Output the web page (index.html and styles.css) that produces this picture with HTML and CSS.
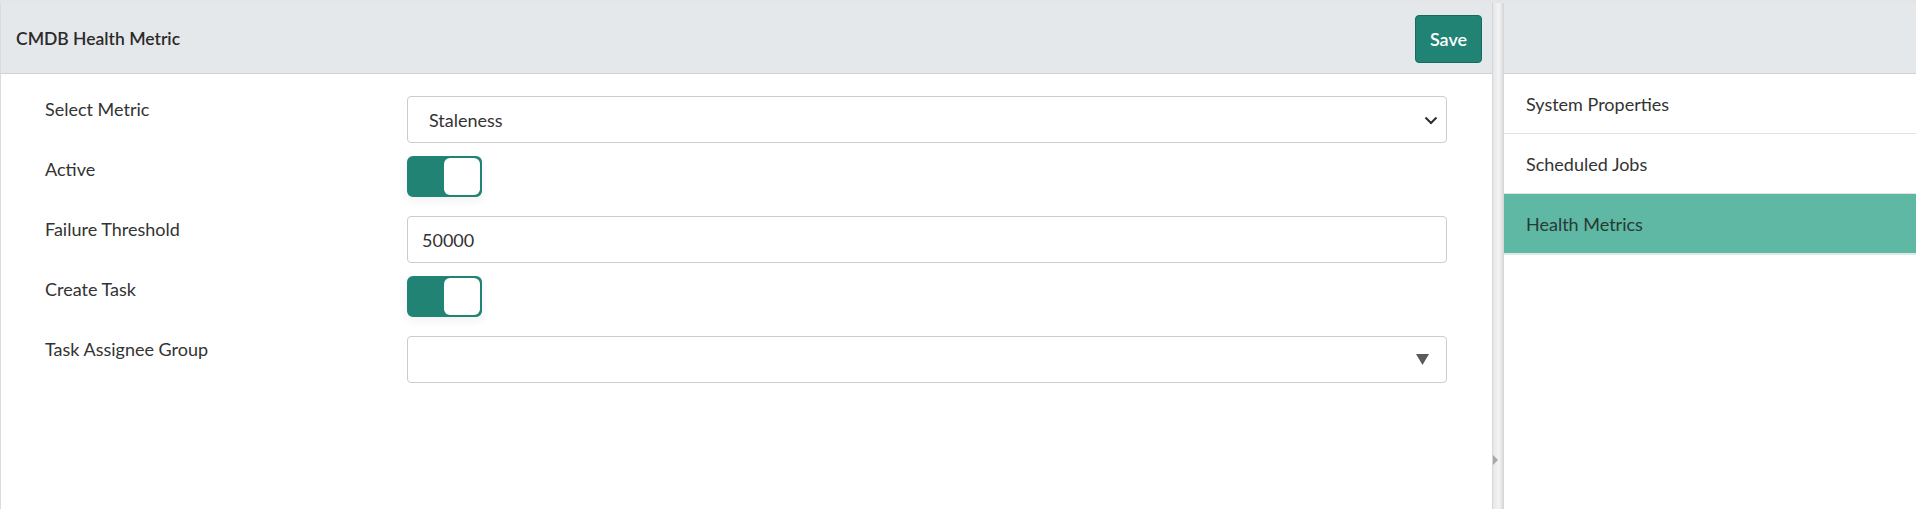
FILE: index.html
```html
<!DOCTYPE html>
<html>
<head>
<meta charset="utf-8">
<link rel="stylesheet" href="styles.css">
</head>
<body>
<div class="page">
  <section class="main">
    <header class="panel-head">
      <h1 class="title">CMDB Health Metric</h1>
      <button class="btn-save">Save</button>
    </header>
    <form class="form">
      <div class="row">
        <label class="lbl">Select Metric</label>
        <div class="field select">
          <span class="val val-select">Staleness</span>
          <svg class="chev" width="14" height="9" viewBox="0 0 14 9"><path d="M1.5 1.5 L7 7 L12.5 1.5" fill="none" stroke="#2d2d2d" stroke-width="2"/></svg>
        </div>
      </div>
      <div class="row">
        <label class="lbl">Active</label>
        <div class="toggle"><span class="knob"></span></div>
      </div>
      <div class="row">
        <label class="lbl">Failure Threshold</label>
        <div class="field"><span class="val">50000</span></div>
      </div>
      <div class="row">
        <label class="lbl">Create Task</label>
        <div class="toggle"><span class="knob"></span></div>
      </div>
      <div class="row">
        <label class="lbl">Task Assignee Group</label>
        <div class="field select">
          <span class="val"></span>
          <svg class="tri" width="13" height="11" viewBox="0 0 13 11"><path d="M0 0 H13 L6.5 11 Z" fill="#5a5a5a"/></svg>
        </div>
      </div>
    </form>
  </section>
  <div class="splitter"><span class="grip"></span></div>
  <aside class="side">
    <div class="panel-head side-head"></div>
    <ul class="menu">
      <li class="item">System Properties</li>
      <li class="item">Scheduled Jobs</li>
      <li class="item active">Health Metrics</li>
    </ul>
  </aside>
</div>
</body>
</html>
```

FILE: styles.css
```css
* { box-sizing: border-box; }
html, body { margin: 0; padding: 0; }
body {
  width: 1916px;
  height: 509px;
  overflow: hidden;
  background: #fff;
  font-family: "Lato", "Liberation Sans", sans-serif;
  color: #343434;
}
.page {
  display: flex;
  height: 509px;
  border-top: 3px solid #e3e5e7;
}
.main {
  width: 1493px;
  border-left: 1px solid #d9dcdf;
  border-right: 1px solid #d4d7da;
  display: flex;
  flex-direction: column;
}
.panel-head {
  height: 71px;
  background: #e5e8eb;
  border-bottom: 1px solid #cfd3d6;
  display: flex;
  align-items: center;
  justify-content: space-between;
  padding: 0 10px 0 15px;
}
.title {
  margin: 0;
  font-size: 17.5px;
  font-weight: 600;
  color: #2b2b2b;
}
.btn-save {
  width: 67px;
  height: 48px;
  margin-top: 1px;
  background: #218373;
  border: 1px solid #196a5e;
  border-radius: 4px;
  color: #fff;
  font-family: inherit;
  font-size: 18px;
  font-weight: 600;
  padding: 0;
}
.form {
  padding: 22px 0 0 44px;
  display: flex;
  flex-direction: column;
}
.row {
  display: grid;
  grid-template-columns: 362px 1040px;
  height: 60px;
  align-items: start;
}
.lbl {
  font-size: 18px;
  line-height: 20px;
  padding-top: 3px;
  color: #333;
}
.field {
  height: 47px;
  border: 1px solid #cccccc;
  border-radius: 4px;
  display: flex;
  align-items: center;
  justify-content: space-between;
  padding: 0 16px 0 14px;
  font-size: 18px;
  color: #333;
}
.field.select { padding-right: 8px; }
.val-select { padding-left: 7px; }
.chev { margin-top: 1px; }
.tri { margin-right: 9px; }
.toggle {
  width: 75px;
  height: 41px;
  border: 2px solid #218373;
  background: #218373;
  border-radius: 6px;
  display: flex;
  justify-content: flex-end;
  box-shadow: 0 4px 10px rgba(0, 0, 0, 0.06);
}
.knob {
  width: 36px;
  height: 100%;
  background: #fff;
  border-radius: 6px;
}
.splitter {
  width: 10px;
  position: relative;
  background: linear-gradient(to right, #e6e6e6, #f4f4f4 60%, #dcdcdc);
}
.grip {
  position: absolute;
  left: 0;
  top: 452px;
  width: 0;
  height: 0;
  border-top: 5px solid transparent;
  border-bottom: 5px solid transparent;
  border-left: 5px solid #a8a8a8;
}
.side {
  flex: 1;
  border-left: 1px solid #d4d7da;
  display: flex;
  flex-direction: column;
}
.side-head { padding: 0; }
.menu {
  list-style: none;
  margin: 0;
  padding: 0;
}
.item {
  height: 60px;
  display: flex;
  align-items: center;
  padding-left: 22px;
  font-size: 18px;
  color: #333;
  border-bottom: 1px solid #e3e3e3;
}
.item.active {
  background: #5eb8a3;
  color: #283a36;
  border-bottom: 2px solid #dcebe8;
  height: 61px;
}
```
